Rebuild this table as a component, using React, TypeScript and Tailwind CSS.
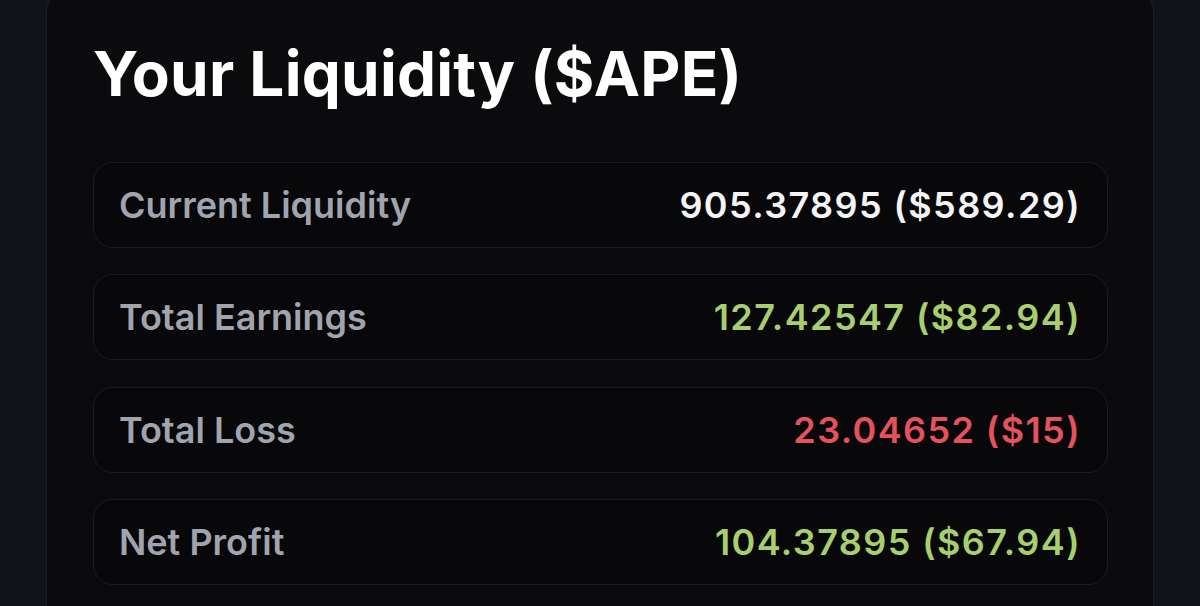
import React from "react";

const rows = [
  { label: "Current Liquidity", value: "905.37895 ($589.29)", color: "text-[#f4f4f5]" },
  { label: "Total Earnings", value: "127.42547 ($82.94)", color: "text-[#a7cf70]" },
  { label: "Total Loss", value: "23.04652 ($15)", color: "text-[#e4525e]" },
  { label: "Net Profit", value: "104.37895 ($67.94)", color: "text-[#a7cf70]" },
];

export default function App() {
  return (
    <div
      className="w-[1200px] h-[606px] overflow-hidden bg-[#111318]"
      style={{ fontFamily: "Inter, 'Noto Sans', sans-serif" }}
    >
      <div className="ml-[46px] mt-[-12px] w-[1108px] h-[700px] rounded-[24px] border border-[#1a1f28] bg-[#0b0b0e] pl-[46px] pr-[45px] pt-[54px]">
        <h1 className="text-[62px] leading-none font-bold text-white tracking-[0.25px]">
          Your Liquidity ($APE)
        </h1>
        <div className="mt-[57px] flex flex-col gap-[26.4px]">
          {rows.map((r) => (
            <div
              key={r.label}
              className="h-[86px] rounded-[20px] border border-[#1a1c22] bg-[#08080a] pl-[25px] pr-[26px] flex items-center justify-between"
            >
              <span className="text-[36px] font-semibold text-[#a0a4ae]">{r.label}</span>
              <span className={`text-[36px] font-semibold tracking-[1.4px] ${r.color}`}>{r.value}</span>
            </div>
          ))}
        </div>
      </div>
    </div>
  );
}
